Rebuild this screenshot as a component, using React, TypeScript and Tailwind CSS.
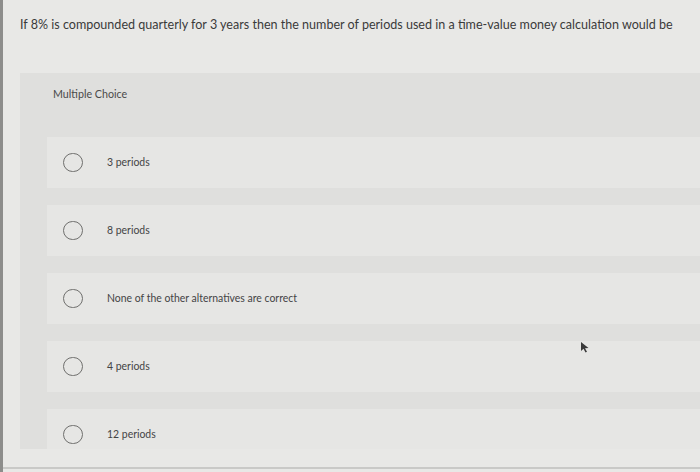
import React from "react";

const options = [
  "3 periods",
  "8 periods",
  "None of the other alternatives are correct",
  "4 periods",
  "12 periods",
];

function Radio() {
  return (
    <span className="block h-[19px] w-[20px] shrink-0 rounded-full border-[1.5px] border-[#6f6f6d]" />
  );
}

export default function App() {
  return (
    <div
      className="relative h-[472px] w-[700px] overflow-hidden border-l-[3px] border-[#8d8d8b] bg-[#e8e8e6] text-[#3f3f3f]"
      style={{ fontFamily: "Lato, 'Open Sans', sans-serif" }}
    >
      <p className="pl-[17px] pt-[17px] text-[12.55px] leading-[16px] text-[#3a3a3a]">
        If 8% is compounded quarterly for 3 years then the number of periods used in a time-value money calculation would be
      </p>

      <div className="ml-[17px] mt-[40px] h-[376px] overflow-hidden bg-[#dfdfdd]">
        <div className="h-[64px] pl-[33px] pt-[13px] text-[10.7px] text-[#4a4a4a]">Multiple Choice</div>
        <div className="ml-[27px] flex flex-col gap-[17px]">
          {options.map((o) => (
            <div key={o} className="flex h-[51px] shrink-0 items-center bg-[#e6e6e4] pl-[16px]">
              <Radio />
              <span className="ml-[24px] text-[10.45px] text-[#444]">{o}</span>
            </div>
          ))}
        </div>
      </div>

      <div className="mt-[18px] h-[2px] bg-[#c9c9c7]" />
      <svg
        className="absolute left-[577px] top-[341px]"
        width="10"
        height="12"
        viewBox="0 0 10 12"
      >
        <path d="M1 1 L1 10 L3.5 7.8 L5.5 11.5 L7 10.8 L5 7.2 L8.5 7 Z" fill="#3a3a3a" />
      </svg>
    </div>
  );
}
